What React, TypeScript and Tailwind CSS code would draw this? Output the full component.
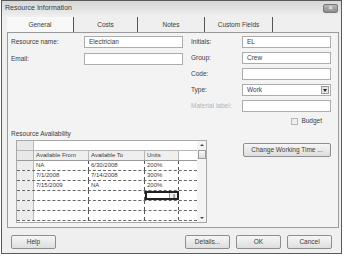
import React from "react";

const font = { fontFamily: '"Liberation Sans", Arial, sans-serif' };

const Field = ({ label, value, labelW, inputW, disabled }: { label: string; value?: string; labelW: string; inputW: string; disabled?: boolean }) => (
  <div className="flex h-[12px] items-center">
    <div className={`${labelW} text-[6.5px] ${disabled ? "text-[#b4b4b4]" : "text-[#3c3c3c]"}`}>{label}</div>
    <div className={`${inputW} h-[12px] border border-[#acacac] bg-white px-[4px] text-[6.5px] leading-[10px] text-[#3c3c3c]`}>{value}</div>
  </div>
);

const rows = [
  ["NA", "6/30/2008", "200%"],
  ["7/1/2008", "7/14/2008", "300%"],
  ["7/15/2009", "NA", "200%"],
  ["", "", ""],
  ["", "", ""],
  ["", "", ""],
];

const Btn = ({ children, w = "w-[45px]" }: { children: React.ReactNode; w?: string }) => (
  <div className={`${w} flex h-[14px] items-center justify-center rounded-[2px] border border-[#8e8e8e] bg-gradient-to-b from-[#f6f6f6] to-[#dedede] text-[6.5px] text-[#3c3c3c]`}>
    {children}
  </div>
);

export default function App() {
  return (
    <div className="h-[258px] w-[344px] bg-white" style={font}>
      <div className="ml-[1px] flex h-[254px] w-[341px] flex-col border border-[#5a5a5a] bg-[#efefef]">
        {/* title bar */}
        <div className="flex h-[14px] items-center justify-between bg-gradient-to-b from-[#d6d6d6] to-[#ececec] pl-[3px] pr-[3px]">
          <span className="text-[7px] text-[#3c3c3c]">Resource Information</span>
          <div className="flex h-[9px] w-[15px] items-center justify-center rounded-[2px] border border-[#7a7a7a] bg-gradient-to-b from-[#b8b8b8] to-[#8c8c8c] text-[6px] leading-none text-white">
            ✕
          </div>
        </div>

        {/* tabs */}
        <div className="mt-[2px] flex h-[15px] pl-[5px]">
          <div className="flex w-[67px] items-center justify-center border-r-[1.5px] border-[#555] bg-[#f8f8f8] text-[6.5px] text-[#3c3c3c]">General</div>
          <div className="flex w-[64px] items-center justify-center border-r-[1.5px] border-[#555] text-[6.5px] text-[#3c3c3c]">Costs</div>
          <div className="flex w-[67px] items-center justify-center border-r-[1.5px] border-[#555] text-[6.5px] text-[#3c3c3c]">Notes</div>
          <div className="flex w-[68px] items-center justify-center border-r-[1.5px] border-[#555] text-[6.5px] text-[#3c3c3c]">Custom Fields</div>
        </div>

        {/* panel */}
        <div className="ml-[5px] flex h-[196px] w-[332px] flex-col border border-[#9a9a9a] bg-[#f3f3f3]">
          <div className="mt-[3px] flex pl-[3px]">
            <div className="flex flex-col gap-[5px]">
              <Field label="Resource name:" value="Electrician" labelW="w-[73px]" inputW="w-[99px]" />
              <Field label="Email:" labelW="w-[73px]" inputW="w-[99px]" />
            </div>
            <div className="ml-[8px] flex flex-col gap-[4px]">
              <Field label="Initials:" value="EL" labelW="w-[51px]" inputW="w-[89px]" />
              <Field label="Group:" value="Crew" labelW="w-[51px]" inputW="w-[89px]" />
              <Field label="Code:" labelW="w-[51px]" inputW="w-[89px]" />
              <div className="flex h-[12px] items-center">
                <div className="w-[51px] text-[6.5px] text-[#3c3c3c]">Type:</div>
                <div className="flex h-[12px] w-[89px] items-center justify-between border border-[#acacac] bg-white pl-[4px] pr-[1px] text-[6.5px] text-[#3c3c3c]">
                  Work
                  <div className="flex h-[8px] w-[8px] items-center justify-center border border-[#999] bg-[#e4e4e4]">
                    <div className="h-0 w-0 border-x-[2px] border-t-[3px] border-x-transparent border-t-[#222]" />
                  </div>
                </div>
              </div>
              <Field label="Material label:" labelW="w-[51px]" inputW="w-[89px]" disabled />
              <div className="mt-[1px] flex h-[8px] items-center justify-end pr-[9px]">
                <div className="mr-[3px] h-[7px] w-[7px] border border-[#b8b8b8] bg-[#f0f0f0]" />
                <span className="text-[6.5px] text-[#3c3c3c]">Budget</span>
              </div>
            </div>
          </div>

          <div className="mt-[4px] pl-[3px] text-[6.5px] text-[#3c3c3c]">Resource Availability</div>

          <div className="mt-[1px] flex">
            {/* grid */}
            <div className="ml-[8px] flex h-[83px] w-[191px] border border-[#a8a8a8] bg-white">
              <div className="flex w-[181px] flex-col">
                <div className="flex h-[10px] border-b border-[#b8b8b8]">
                  <div className="w-[17px] border-r border-[#b8b8b8] bg-[#e8e8e8]" />
                </div>
                <div className="flex h-[10px] border-b border-[#9a9a9a] text-[6px] text-[#3c3c3c]">
                  <div className="w-[17px] border-r border-[#b8b8b8] bg-[#e8e8e8]" />
                  <div className="w-[55px] border-r border-[#b8b8b8] bg-[#efefef] pl-[2px] leading-[9px]">Available From</div>
                  <div className="w-[56px] border-r border-[#b8b8b8] bg-[#efefef] pl-[2px] leading-[9px]">Available To</div>
                  <div className="w-[34px] border-r border-[#b8b8b8] bg-[#efefef] pl-[2px] leading-[9px]">Units</div>
                </div>
                {rows.map((r, i) => (
                  <div key={i} className="flex h-[10px] border-b border-dashed border-[#666] text-[6px] leading-[9px] text-[#3c3c3c]">
                    <div className="w-[17px] border-r border-[#b8b8b8] bg-[#ececec]" />
                    <div className="w-[55px] border-r border-dashed border-[#555] pl-[2px]">{r[0]}</div>
                    <div className="w-[56px] border-r border-dashed border-[#555] pl-[2px]">{r[1]}</div>
                    {i === 3 ? (
                      <div className="flex w-[34px] justify-end border-2 border-[#222]">
                        <div className="w-[8px] border-l border-[#999] bg-[#eee] text-center text-[5px] leading-[7px]">⇕</div>
                      </div>
                    ) : (
                      <div className="w-[34px] border-r border-dashed border-[#555] pl-[2px]">{r[2]}</div>
                    )}
                  </div>
                ))}
              </div>
              <div className="ml-auto flex w-[9px] flex-col items-center bg-[#f4f4f4]">
                <div className="mt-[3px] h-0 w-0 border-x-[2px] border-b-[2px] border-x-transparent border-b-[#444]" />
                <div className="mt-[4px] h-[9px] w-[8px] border border-[#9c9c9c] bg-gradient-to-b from-[#f8f8f8] to-[#dcdcdc]" />
                <div className="mt-auto mb-[3px] h-0 w-0 border-x-[2px] border-t-[2px] border-x-transparent border-t-[#444]" />
              </div>
            </div>

            <div className="ml-[36px] mt-[3px]">
              <Btn w="w-[88px]">Change Working Time ...</Btn>
            </div>
          </div>
        </div>

        {/* buttons */}
        <div className="mt-[7px] flex pl-[9px] pr-[9px]">
          <Btn>Help</Btn>
          <div className="ml-auto flex gap-[6px]">
            <Btn>Details...</Btn>
            <Btn>OK</Btn>
            <Btn>Cancel</Btn>
          </div>
        </div>
      </div>
    </div>
  );
}
